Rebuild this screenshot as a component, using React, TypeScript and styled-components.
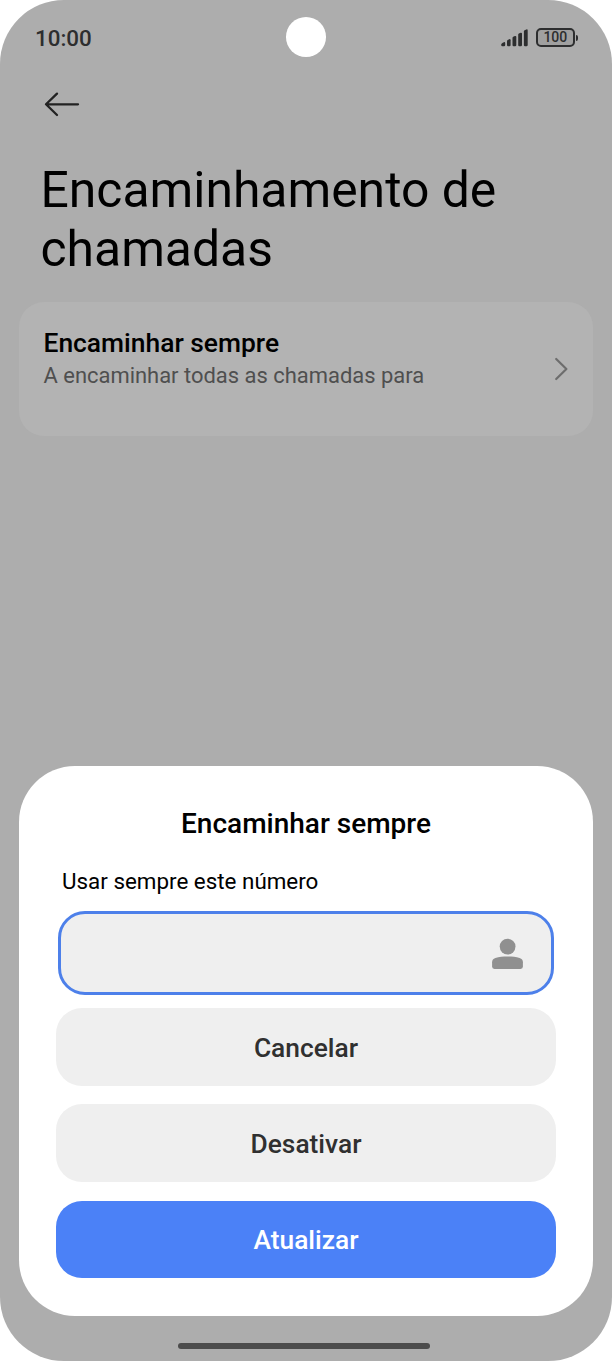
import React from "react";
import styled, { createGlobalStyle } from "styled-components";

const GlobalStyle = createGlobalStyle`
  *, *::before, *::after { box-sizing: border-box; }
  body { margin: 0; background: #fff; font-family: Roboto, "Liberation Sans", sans-serif; }
  h1, h2, p { margin: 0; font-weight: 400; }
  button { font: inherit; border: 0; padding: 0; background: none; }
  svg { display: block; flex: none; }
`;

const Phone = styled.div`
  position: relative;
  width: 612px;
  height: 1361px;
  display: flex;
  flex-direction: column;
  background: #adadad;
  border-radius: 64px;
  overflow: hidden;
`;

const StatusBar = styled.header`
  display: flex;
  justify-content: space-between;
  align-items: center;
  height: 75px;
  padding: 0 34px 0 35px;
  color: #2d2e2f;
`;

const Clock = styled.span`
  font-size: 22.4px;
  font-weight: 500;
  line-height: 26px;
`;

const StatusIcons = styled.div`
  display: flex;
  align-items: center;
  gap: 8px;
`;

const Battery = styled.div`
  display: flex;
  align-items: center;
  gap: 1px;
  &::after {
    content: "";
    width: 2.5px;
    height: 6px;
    border-radius: 0 2px 2px 0;
    background: #2d2e2f;
  }
`;

const BatteryBody = styled.span`
  width: 38.5px;
  height: 18.5px;
  border: 2px solid #2d2e2f;
  border-radius: 5px;
  background: #a0a0a0;
  font-size: 14px;
  font-weight: 500;
  line-height: 15.5px;
  letter-spacing: -0.1px;
  text-align: center;
`;

const Camera = styled.div`
  position: absolute;
  top: 17px;
  left: 286px;
  width: 40px;
  height: 39.5px;
  border-radius: 50%;
  background: #fff;
`;

const Toolbar = styled.nav`
  padding: 16px 0 0 44px;
  height: 86px;
`;

const PageTitle = styled.h1`
  padding: 0 40.5px;
  font-size: 49.85px;
  line-height: 58.6px;
  color: #000;
`;

const SettingRow = styled.section`
  display: flex;
  justify-content: space-between;
  align-items: center;
  margin: 24px 19px 0;
  padding: 0 25px 0 24.5px;
  height: 134px;
  border-radius: 25px;
  background: #b3b3b3;
`;

const RowText = styled.div`
  height: 87px;
`;

const RowTitle = styled.h2`
  font-size: 26.4px;
  font-weight: 500;
  line-height: 34px;
  color: #000;
`;

const RowSummary = styled.p`
  font-size: 21.95px;
  line-height: 31px;
  color: #4f4f4f;
`;

const Sheet = styled.section`
  position: absolute;
  left: 19px;
  right: 19px;
  bottom: 45.5px;
  height: 550px;
  display: flex;
  flex-direction: column;
  padding: 0 37px;
  border-radius: 56px;
  background: #fff;
`;

const SheetTitle = styled.h2`
  margin-top: 41px;
  font-size: 28px;
  font-weight: 500;
  line-height: 34px;
  text-align: center;
  color: #000;
`;

const FieldLabel = styled.label`
  margin-top: 25px;
  padding-left: 6px;
  font-size: 22.4px;
  line-height: 30px;
  color: #000;
`;

const NumberField = styled.div`
  display: flex;
  align-items: center;
  justify-content: flex-end;
  margin: 15.5px 2px 13px 1.7px;
  padding: 2px 28px 0 0;
  height: 84px;
  border: 3px solid #4d80ea;
  border-radius: 27px;
  background: #efefef;
`;

const Actions = styled.div`
  display: flex;
  flex-direction: column;
  gap: 18.8px;
`;

const ActionButton = styled.button<{ $primary?: boolean }>`
  height: 77.5px;
  padding-top: 1.5px;
  border-radius: 26px;
  background: ${(p) => (p.$primary ? "#4b81f7" : "#efefef")};
  color: ${(p) => (p.$primary ? "#fff" : "#303030")};
  font-size: 26.35px;
  font-weight: 500;
  line-height: 32px;
`;

const HomeIndicator = styled.div`
  width: 252px;
  height: 6px;
  margin: auto 0 12px 178px;
  border-radius: 3px;
  background: #4c4c4c;
`;

const SignalIcon = () => (
  <svg width="27" height="18" viewBox="0 0 27 18" fill="#2d2e2f">
    <path d="M0.2 15.4Q0.4 14.6 1.4 14L2.8 13.2Q4.2 12.8 4.2 14.2V16Q4.2 17.2 3 17.2H1.4Q0.2 17.2 0.2 16Z" />
    <path d="M6 12.2Q6 11.4 6.7 11L8.2 10.2Q9.6 9.8 9.6 11.2V16Q9.6 17.2 8.4 17.2H7.2Q6 17.2 6 16Z" />
    <path d="M11.5 9Q11.5 8.2 12.2 7.8L13.9 7Q15.3 6.6 15.3 8V16Q15.3 17.2 14.1 17.2H12.7Q11.5 17.2 11.5 16Z" />
    <path d="M17.2 5.8Q17.2 5 17.9 4.6L19.6 3.8Q21 3.4 21 4.8V16Q21 17.2 19.8 17.2H18.4Q17.2 17.2 17.2 16Z" />
    <path d="M22.9 2.4Q22.9 1.6 23.6 1.2L25.3 0.4Q26.7 0 26.7 1.4V16Q26.7 17.2 25.5 17.2H24.1Q22.9 17.2 22.9 16Z" />
  </svg>
);

const BackIcon = () => (
  <svg width="36" height="28" viewBox="0 0 36 28" fill="none" stroke="#222" strokeWidth="2.3" strokeLinecap="round" strokeLinejoin="round">
    <path d="M34 13.3H2M13 2.6L2 13.3L13 24" />
  </svg>
);

const ChevronIcon = () => (
  <svg width="14" height="24" viewBox="0 0 14 24" fill="none" stroke="#6d6d6d" strokeWidth="2.2" strokeLinecap="round" strokeLinejoin="round">
    <path d="M2.2 2L12.4 12L2.2 22" />
  </svg>
);

const PersonIcon = () => (
  <svg width="31" height="32" viewBox="0 0 31 32" fill="#909090">
    <circle cx="15.6" cy="8.6" r="7.9" />
    <path d="M0.1 24.2C0.1 21.8 1.2 20.6 3.4 19.9C7 18.8 11 18.4 15.5 18.4S24 18.8 27.6 19.9C29.8 20.6 30.9 21.8 30.9 24.2V28.6Q30.9 30.9 28.6 30.9H2.4Q0.1 30.9 0.1 28.6Z" />
  </svg>
);

export default function App() {
  return (
    <>
      <GlobalStyle />
      <Phone>
        <StatusBar>
          <Clock>10:00</Clock>
          <StatusIcons>
            <SignalIcon />
            <Battery>
              <BatteryBody>100</BatteryBody>
            </Battery>
          </StatusIcons>
        </StatusBar>
        <Camera />
        <Toolbar>
          <BackIcon />
        </Toolbar>
        <PageTitle>Encaminhamento de chamadas</PageTitle>
        <SettingRow>
          <RowText>
            <RowTitle>Encaminhar sempre</RowTitle>
            <RowSummary>A encaminhar todas as chamadas para</RowSummary>
          </RowText>
          <ChevronIcon />
        </SettingRow>
        <HomeIndicator />
        <Sheet>
          <SheetTitle>Encaminhar sempre</SheetTitle>
          <FieldLabel>Usar sempre este número</FieldLabel>
          <NumberField>
            <PersonIcon />
          </NumberField>
          <Actions>
            <ActionButton>Cancelar</ActionButton>
            <ActionButton>Desativar</ActionButton>
            <ActionButton $primary>Atualizar</ActionButton>
          </Actions>
        </Sheet>
      </Phone>
    </>
  );
}
